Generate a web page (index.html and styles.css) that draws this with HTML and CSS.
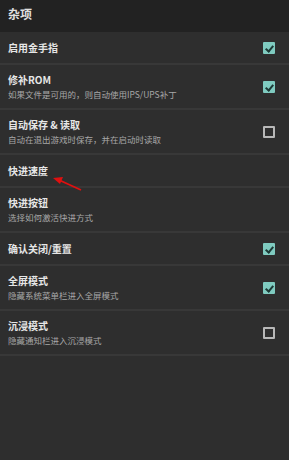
FILE: index.html
```html
<!DOCTYPE html>
<html lang="zh">
<head>
<meta charset="UTF-8">
<title>杂项</title>
<link rel="stylesheet" href="styles.css">
</head>
<body>
<div class="bar">杂项</div>
<ul class="prefs">
<li class="row single">
<div class="text"><div class="title">启用金手指</div></div>
<span class="box on"></span>
</li>
<li class="row">
<div class="text"><div class="title">修补ROM</div><div class="sub">如果文件是可用的，则自动使用IPS/UPS补丁</div></div>
<span class="box on"></span>
</li>
<li class="row">
<div class="text"><div class="title">自动保存 &amp; 读取</div><div class="sub">自动在退出游戏时保存，并在启动时读取</div></div>
<span class="box"></span>
</li>
<li class="row single arrowed">
<div class="text"><div class="title">快进速度</div></div>
<svg class="arrow" width="40" height="20" viewBox="0 0 40 20">
<line x1="31" y1="15" x2="9" y2="5" stroke="#e01010" stroke-width="1.8"/>
<polygon points="3,3 13,2 10,9" fill="#e01010"/>
</svg>
</li>
<li class="row">
<div class="text"><div class="title">快进按钮</div><div class="sub">选择如何激活快进方式</div></div>
</li>
<li class="row single">
<div class="text"><div class="title">确认关闭/重置</div></div>
<span class="box on"></span>
</li>
<li class="row">
<div class="text"><div class="title">全屏模式</div><div class="sub">隐藏系统菜单栏进入全屏模式</div></div>
<span class="box on"></span>
</li>
<li class="row">
<div class="text"><div class="title">沉浸模式</div><div class="sub">隐藏通知栏进入沉浸模式</div></div>
<span class="box"></span>
</li>
</ul>
</body>
</html>
```

FILE: styles.css
```css
body {
    margin: 0;
    background: #2e2e2e;
    font-family: "Noto Sans CJK SC", "Noto Sans", sans-serif;
    color: #e8e8e8;
}
.bar {
    height: 32px;
    box-sizing: border-box;
    padding: 5px 8px 0 8px;
    background: #222222;
    font-size: 12px;
    font-weight: bold;
    color: #e0e0e0;
}
.prefs {
    list-style: none;
    margin: 0;
    padding: 0;
}
.row {
    position: relative;
    display: flex;
    align-items: center;
    height: 45px;
    box-sizing: border-box;
    padding: 0 14px 0 8px;
    border-bottom: 2px solid #383838;
}
.row.single {
    height: 33px;
}
.text {
    flex: 1;
}
.title {
    font-size: 10px;
    line-height: 14px;
    font-weight: bold;
    color: #e6e6e6;
}
.sub {
    font-size: 8.5px;
    line-height: 14px;
    color: #a8a8a8;
}
.box {
    width: 8px;
    height: 8px;
    border: 2px solid #b8b8b8;
    border-radius: 1px;
    position: relative;
}
.box.on {
    background: #7fcbc0;
    border-color: #7fcbc0;
}
.box.on::after {
    content: "";
    position: absolute;
    left: 2px;
    top: 0px;
    width: 3px;
    height: 6px;
    border-right: 2px solid #1d3a36;
    border-bottom: 2px solid #1d3a36;
    transform: rotate(40deg);
}
.arrow {
    position: absolute;
    left: 50px;
    top: 20px;
}
```
